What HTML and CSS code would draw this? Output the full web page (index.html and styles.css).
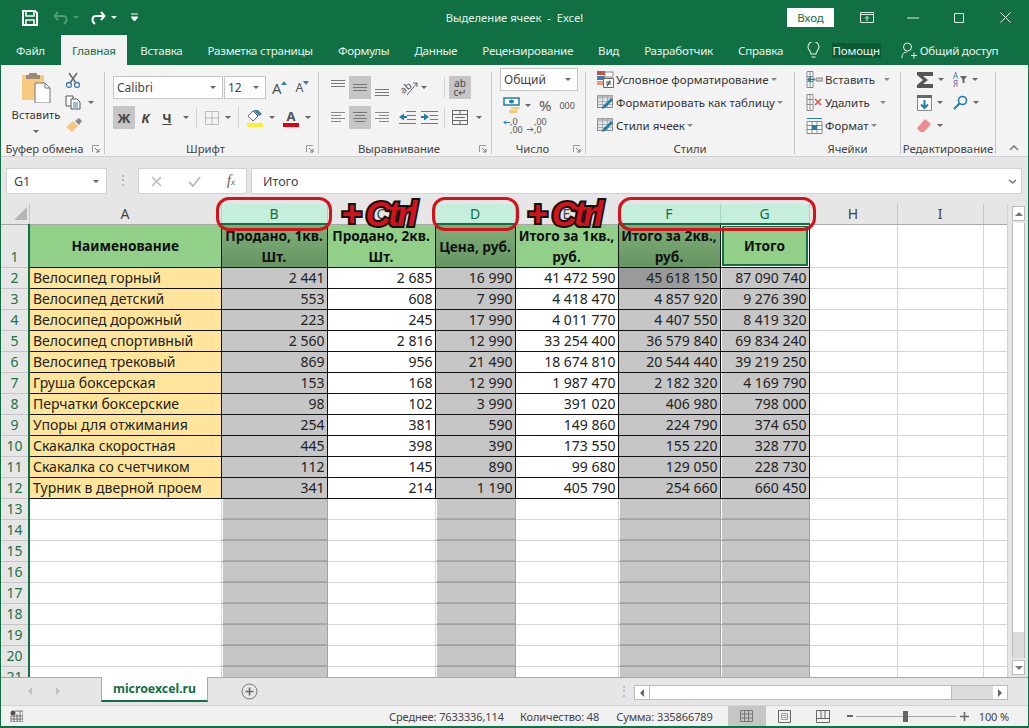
FILE: index.html
```html
<!DOCTYPE html>
<html lang="ru">
<head>
<meta charset="utf-8">
<title>Выделение ячеек - Excel</title>
<link rel="stylesheet" href="styles.css">
</head>
<body>
<div class="win">
  <header class="titlebar">
    <div class="qat">
      <svg class="ic save" width="16" height="16" viewBox="0 0 16 16"><path d="M1 1h12l2 2v12H1z" fill="none" stroke="#fff" stroke-width="2"/><path d="M4 1h8v5H4zM4 10h8v5H4z" fill="none" stroke="#fff" stroke-width="1.6"/></svg>
      <svg class="ic undo" width="16" height="14" viewBox="0 0 16 14"><path d="M5 1L1.500 5 5 9M2 5h8c4 0 5 5 1 8" fill="none" stroke="#4d9a76" stroke-width="2"/></svg>
      <i class="dd dd-faint"></i>
      <svg class="ic redo" width="16" height="14" viewBox="0 0 16 14"><path d="M11 1l3.500 4L11 9M14 5H6c-4 0-5 5-1 8" fill="none" stroke="#fff" stroke-width="2"/></svg>
      <i class="dd dd-w"></i>
      <svg class="ic cust" width="7" height="9" viewBox="0 0 7 9"><path d="M0 1h7M0 4h7l-3.500 4z" stroke="#fff" fill="#fff"/></svg>
    </div>
    <div class="doc-title">Выделение ячеек  -  Excel</div>
    <div class="wctl">
      <button class="signin">Вход</button>
      <div class="wbtn"><svg width="14" height="11" viewBox="0 0 14 11"><path d="M.5.500h13v10H.5zM.5 2.500h13M7 9V4.500M5 6.500l2-2 2 2" fill="none" stroke="#dfeee7"/></svg></div>
      <div class="wbtn"><svg width="12" height="2" viewBox="0 0 12 2"><path d="M0 1h12" stroke="#dfeee7"/></svg></div>
      <div class="wbtn"><svg width="10" height="10" viewBox="0 0 10 10"><path d="M.5.500h9v9h-9z" fill="none" stroke="#dfeee7"/></svg></div>
      <div class="wbtn"><svg width="11" height="11" viewBox="0 0 11 11"><path d="M.5.500l10 10M10.500.500l-10 10" stroke="#dfeee7"/></svg></div>
    </div>
  </header>

  <nav class="tabs">
    <span class="tab t-file">Файл</span>
    <span class="tab active">Главная</span>
    <span class="tab">Вставка</span>
    <span class="tab">Разметка страницы</span>
    <span class="tab">Формулы</span>
    <span class="tab">Данные</span>
    <span class="tab">Рецензирование</span>
    <span class="tab">Вид</span>
    <span class="tab">Разработчик</span>
    <span class="tab">Справка</span>
    <svg class="bulb" width="13" height="17" viewBox="0 0 13 17"><path d="M4 12c0-3-3-4-3-7a5.500 5.500 0 0 1 11 0c0 3-3 4-3 7zM4.500 15h4" fill="none" stroke="#e8f2ed" stroke-width="1.100"/></svg>
    <span class="help">Помощн</span>
    <svg class="person" width="16" height="17" viewBox="0 0 16 17"><circle cx="6.500" cy="5" r="4" fill="none" stroke="#e8f2ed"/><path d="M1 16c0-4 2-6 5-6M10 13.500h6M13 10.500v6" fill="none" stroke="#e8f2ed"/></svg>
    <span class="share">Общий доступ</span>
  </nav>

  <section class="ribbon">
    <div class="grp g-clip">
      <div class="body clip">
        <div class="paste">
          <svg width="30" height="31" viewBox="0 0 30 31"><path d="M1 3h22v25H1z" fill="#f8c981"/><path d="M8 1h8v2h3v4H5V3h3z" fill="#9a8a78"/><path d="M14 11h10l5 5v15H14z" fill="#fff" stroke="#777"/><path d="M24 11v5h5" fill="none" stroke="#777"/></svg>
          <span class="paste-l">Вставить</span>
          <i class="dd"></i>
        </div>
        <div class="clip-tools">
          <svg width="16" height="16" viewBox="0 0 16 16"><path d="M4 1l7 10M12 1L5 11" stroke="#666" stroke-width="1.500"/><circle cx="4" cy="13" r="2.500" fill="none" stroke="#3f7fb0" stroke-width="1.300"/><circle cx="12" cy="13" r="2.500" fill="none" stroke="#3f7fb0" stroke-width="1.300"/></svg>
          <span class="row-dd"><svg width="16" height="15" viewBox="0 0 16 15"><path d="M1 1h7v10H1z" fill="#fff" stroke="#555"/><path d="M6 4h6l3 3v7H6z" fill="#fff" stroke="#555"/><path d="M8 8h5M8 10h5M8 12h5" stroke="#3f7fb0"/></svg><i class="dd"></i></span>
          <svg width="18" height="16" viewBox="0 0 18 16"><path d="M1 10l7-6 5 5-6 6z" fill="#f5c67f"/><path d="M10 4l4-3 3 3-3 4z" fill="#8a8a8a"/></svg>
        </div>
      </div>
      <div class="lbl lbl-clip"><span>Буфер обмена</span><svg class="launch" width="8" height="8" viewBox="0 0 8 8"><use href="#launcher"/></svg></div>
    </div>

    <div class="grp g-font">
      <div class="body stack">
        <div class="line">
          <div class="sel font-sel"><span>Calibri</span><i class="dd"></i></div>
          <div class="sel size-sel"><span>12</span><i class="dd"></i></div>
          <span class="grow big">A<svg width="6" height="4" viewBox="0 0 6 4"><path d="M0 4l3-4 3 4z" fill="#3f7f9f"/></svg></span>
          <span class="grow small">A<svg width="6" height="4" viewBox="0 0 6 4"><path d="M0 0l3 4 3-4z" fill="#3f7f9f"/></svg></span>
        </div>
        <div class="line">
          <span class="btn on b-w">Ж</span>
          <span class="btn i-w">К</span>
          <span class="btn u-w">Ч</span>
          <i class="dd d-u"></i>
          <b class="vsep s-1"></b>
          <svg class="b-ic" width="14" height="14" viewBox="0 0 14 14"><path d="M.5.500h13v13H.5zM.5 7h13M7 .5v13" fill="none" stroke="#8a8a8a" stroke-dasharray="1 1"/></svg>
          <i class="dd d-b"></i>
          <b class="vsep s-2"></b>
          <svg class="fill-ic" width="18" height="18" viewBox="0 0 18 18"><path d="M2 7l5-5 5 5-5 5z" fill="#fff" stroke="#666"/><path d="M7 1l6 6 3-2-4-4z" fill="#3f7f9f"/><path d="M1 14h16v4H1z" fill="#ffee33"/></svg>
          <i class="dd d-f"></i>
          <span class="fcolor">A</span>
          <i class="dd d-c"></i>
        </div>
      </div>
      <div class="lbl"><span>Шрифт</span><svg class="launch" width="8" height="8" viewBox="0 0 8 8"><use href="#launcher"/></svg></div>
    </div>

    <div class="grp g-align">
      <div class="body stack">
        <div class="line">
          <svg class="al" width="22" height="23" viewBox="0 0 22 23"><path d="M4 4.500h14M4 7.500h14M4 10.500h14" stroke="#777"/></svg>
          <svg class="al on" width="22" height="23" viewBox="0 0 22 23"><path d="M4 8.500h14M4 11.500h14M4 14.500h14" stroke="#777"/></svg>
          <svg class="al" width="22" height="23" viewBox="0 0 22 23"><path d="M4 13.500h14M4 16.500h14M4 19.500h14" stroke="#777"/></svg>
          <svg class="orient" width="20" height="18" viewBox="0 0 20 18"><text x="1" y="12" transform="rotate(-40 7 9)" font-size="10" fill="#555" font-family="Noto Sans, sans-serif">ab</text><path d="M8 16l10-12M14 4h4v4" fill="none" stroke="#666"/></svg>
          <i class="dd d-o"></i>
          <b class="vsep s-3"></b>
          <span class="wrap on"><span>ab</span><span>c↵</span></span>
        </div>
        <div class="line">
          <svg class="al" width="22" height="23" viewBox="0 0 22 23"><path d="M4 6.500h14M4 9.500h10M4 12.500h14M4 15.500h10" stroke="#888"/></svg>
          <svg class="al on" width="22" height="23" viewBox="0 0 22 23"><path d="M4 6.500h14M6 9.500h10M4 12.500h14M6 15.500h10" stroke="#777"/></svg>
          <svg class="al" width="22" height="23" viewBox="0 0 22 23"><path d="M4 6.500h14M8 9.500h10M4 12.500h14M8 15.500h10" stroke="#888"/></svg>
          <svg class="ind i-1" width="17" height="13" viewBox="0 0 17 13"><path d="M7 .5h10M8 4.500h9M8 8.500h9M0 12.500h17" stroke="#777"/><path d="M0 6l5-3.500V5h3v2H5v2.500z" fill="#1f7fa5"/></svg>
          <svg class="ind i-2" width="17" height="13" viewBox="0 0 17 13"><path d="M0 .5h17M9 4.500h8M9 8.500h8M0 12.500h17" stroke="#777"/><path d="M8 6L3 2.500V5H0v2h3v2.500z" fill="#1f7fa5"/></svg>
          <b class="vsep s-4"></b>
          <svg class="merge" width="16" height="15" viewBox="0 0 16 15"><path d="M.5.500h15v14H.5zM.5 4.500h15M.5 10.500h15M8 .5v4M8 10.500v4" fill="none" stroke="#666"/><path d="M3 7.500h10" stroke="#1f7fa5"/></svg>
          <i class="dd d-m"></i>
        </div>
      </div>
      <div class="lbl"><span>Выравнивание</span><svg class="launch" width="8" height="8" viewBox="0 0 8 8"><use href="#launcher"/></svg></div>
    </div>

    <div class="grp g-num">
      <div class="body num">
        <div class="sel num-sel"><span>Общий</span><i class="dd"></i></div>
        <div class="line num-2">
          <svg width="18" height="17" viewBox="0 0 18 17"><path d="M1 1h15v7H1z" fill="#fff" stroke="#1f7fa5" stroke-width="1.500"/><path d="M6 4.500a2.500 2 0 0 1 5 0a2.500 2 0 0 1-5 0z" fill="#1f7fa5"/><path d="M8 10h8v2H8zM6 13h8v3H6z" fill="#f5c67f"/></svg>
          <i class="dd"></i>
          <span class="pct">%</span>
          <span class="thou">000</span>
        </div>
        <div class="line num-3">
          <span class="dec"><svg width="7" height="14" viewBox="0 0 7 14"><path d="M7 3.500H1M3 1.500l-2 2 2 2" fill="none" stroke="#1f7fa5"/></svg><span>,0<br>,00</span></span>
          <span class="dec"><svg width="7" height="14" viewBox="0 0 7 14"><path d="M0 10.500h6M4 8.500l2 2-2 2" fill="none" stroke="#1f7fa5"/></svg><span>,00<br>,0</span></span>
        </div>
      </div>
      <div class="lbl"><span>Число</span><svg class="launch" width="8" height="8" viewBox="0 0 8 8"><use href="#launcher"/></svg></div>
    </div>

    <div class="grp g-sty">
      <div class="body lst">
        <div class="item"><svg width="17" height="17" viewBox="0 0 17 17"><path d="M0 0h8v4H0z" fill="#c2573f"/><path d="M0 5h8v4H0z" fill="#3f7fb0"/><path d="M0 10h6v4H0z" fill="#e59b7f"/><path d="M8 1h8v5H8z" fill="#fff" stroke="#888"/><path d="M6.500 7.500h10v9h-10z" fill="#fff" stroke="#666"/><path d="M9 11h5M9 13h5M13 9.500l-3 6" stroke="#444"/></svg><span>Условное форматирование</span><i class="dd"></i></div>
        <div class="item"><svg width="17" height="17" viewBox="0 0 17 17"><use href="#tblstyle"/></svg><span>Форматировать как таблицу</span><i class="dd"></i></div>
        <div class="item"><svg width="17" height="17" viewBox="0 0 17 17"><use href="#tblstyle"/></svg><span>Стили ячеек</span><i class="dd"></i></div>
      </div>
      <div class="lbl nolaunch"><span>Стили</span></div>
    </div>

    <div class="grp g-cell">
      <div class="body lst">
        <div class="item"><svg width="17" height="17" viewBox="0 0 17 17"><path d="M1 .5h6v16H1zM1 5.500h6M1 10.500h6M4 .5v16" fill="#fff" stroke="#888"/><path d="M10 7h7v3h-7z" fill="#ccc" stroke="#888"/><path d="M2 8.500h7M5 6L2 8.500 5 11" fill="none" stroke="#1f7fa5" stroke-width="1.300"/></svg><span>Вставить</span><i class="dd d1"></i></div>
        <div class="item"><svg width="17" height="17" viewBox="0 0 17 17"><path d="M1 .5h6v16H1zM1 5.500h6M1 10.500h6M4 .5v16" fill="#fff" stroke="#888"/><path d="M9 5l6 6M15 5l-6 6" stroke="#d9534f" stroke-width="1.500"/></svg><span>Удалить</span><i class="dd d2"></i></div>
        <div class="item"><svg width="17" height="17" viewBox="0 0 17 17"><path d="M1 4.500h15v12H1zM1 8.500h15M1 12.500h15M6 4.500v12M11 4.500v12" fill="#fff" stroke="#888"/><path d="M6 8h5v5H6z" fill="#1f7fa5"/><path d="M1 1.500h15" stroke="#1f7fa5"/></svg><span>Формат</span><i class="dd"></i></div>
      </div>
      <div class="lbl nolaunch"><span>Ячейки</span></div>
    </div>

    <div class="grp g-edit">
      <div class="body edit">
        <div class="line e1">
          <svg class="sigma" width="16" height="16" viewBox="0 0 16 16"><path d="M0 0h16v4H6l5 4-5 4h10v4H0v-3l6-5-6-5z" fill="#555"/></svg><i class="dd"></i>
          <span class="sort"><span>А</span><span class="ya">Я</span></span>
          <svg class="fun" width="7" height="7" viewBox="0 0 7 7"><path d="M0 0h7L4.500 3.500V7h-2V3.500z" fill="#666"/></svg><i class="dd"></i>
        </div>
        <div class="line e2">
          <svg width="15" height="16" viewBox="0 0 15 16"><path d="M.5 2.500h14v13H.5z" fill="#fff" stroke="#888"/><path d="M0 0h15v3H0z" fill="#666"/><path d="M7.500 5v8M4 9.500l3.500 3.500 3.500-3.500" fill="none" stroke="#1f7fa5" stroke-width="2"/></svg><i class="dd"></i>
          <svg class="lens" width="15" height="15" viewBox="0 0 15 15"><circle cx="9.500" cy="5.500" r="4" fill="none" stroke="#1f7fa5" stroke-width="1.600"/><path d="M6.500 8.500L1 14" stroke="#1f7fa5" stroke-width="2"/></svg><i class="dd"></i>
        </div>
        <div class="line e3">
          <svg width="15" height="15" viewBox="0 0 15 15"><path d="M0 10l8-9 6 5-7 8H3z" fill="#ee8d91"/></svg><i class="dd"></i>
        </div>
      </div>
      <div class="lbl nolaunch"><span>Редактирование</span></div>
    </div>
    <div class="collapse"><svg width="10" height="6" viewBox="0 0 10 6"><path d="M1 5l4-4 4 4" fill="none" stroke="#777" stroke-width="1.500"/></svg></div>
  </section>

  <div class="fbar">
    <div class="namebox"><span>G1</span><i class="dd"></i></div>
    <div class="fdots">⋮</div>
    <div class="fbtns">
      <svg width="11" height="11" viewBox="0 0 11 11"><path d="M1 1l9 9M10 1l-9 9" stroke="#bbb" stroke-width="1.500"/></svg>
      <svg width="13" height="11" viewBox="0 0 13 11"><path d="M1 6l4 4 7-9" fill="none" stroke="#bbb" stroke-width="1.800"/></svg>
      <span class="fx">f<sub>x</sub></span>
    </div>
    <div class="finput"><span>Итого</span><svg width="9" height="5" viewBox="0 0 9 5"><path d="M1 1l3.500 3L8 1" fill="none" stroke="#666" stroke-width="1.300"/></svg></div>
  </div>

  <div class="sheetrow">
    <div class="sheet">
      <div class="viewport">
        <table class="cells">
          <colgroup><col class="c0"><col class="ca"><col class="cb"><col class="cc"><col class="cd"><col class="ce"><col class="cf"><col class="cg"><col class="ch"><col class="ci"><col class="cj"></colgroup>
          <thead>
            <tr><th class="corner"><svg width="13" height="13" viewBox="0 0 13 13"><path d="M13 0v13H0z" fill="#b5b5b5"/></svg></th><th>A</th><th class="sh">B</th><th>C</th><th class="sh">D</th><th>E</th><th class="sh">F</th><th class="sh">G</th><th>H</th><th>I</th><th class="last"></th></tr>
          </thead>
          <tbody>
            <tr class="r1"><th>1</th><td class="hd">Наименование</td><td class="hd dk">Продано, 1кв.<br>Шт.</td><td class="hd">Продано, 2кв.<br>Шт.</td><td class="hd dk">Цена, руб.</td><td class="hd">Итого за 1кв.,<br>руб.</td><td class="hd dk">Итого за 2кв.,<br>руб.</td><td class="hd act"><span>Итого</span></td><td></td><td></td><td></td></tr>
            <tr class="d"><th>2</th><td class="nm">Велосипед горный</td><td class="s">2 441</td><td>2 685</td><td class="s">16 990</td><td>41 472 590</td><td class="s first">45 618 150</td><td class="s gl">87 090 740</td><td></td><td></td><td></td></tr>
            <tr class="d"><th>3</th><td class="nm">Велосипед детский</td><td class="s">553</td><td>608</td><td class="s">7 990</td><td>4 418 470</td><td class="s">4 857 920</td><td class="s gl">9 276 390</td><td></td><td></td><td></td></tr>
            <tr class="d"><th>4</th><td class="nm">Велосипед дорожный</td><td class="s">223</td><td>245</td><td class="s">17 990</td><td>4 011 770</td><td class="s">4 407 550</td><td class="s gl">8 419 320</td><td></td><td></td><td></td></tr>
            <tr class="d"><th>5</th><td class="nm">Велосипед спортивный</td><td class="s">2 560</td><td>2 816</td><td class="s">12 990</td><td>33 254 400</td><td class="s">36 579 840</td><td class="s gl">69 834 240</td><td></td><td></td><td></td></tr>
            <tr class="d"><th>6</th><td class="nm">Велосипед трековый</td><td class="s">869</td><td>956</td><td class="s">21 490</td><td>18 674 810</td><td class="s">20 544 440</td><td class="s gl">39 219 250</td><td></td><td></td><td></td></tr>
            <tr class="d"><th>7</th><td class="nm">Груша боксерская</td><td class="s">153</td><td>168</td><td class="s">12 990</td><td>1 987 470</td><td class="s">2 182 320</td><td class="s gl">4 169 790</td><td></td><td></td><td></td></tr>
            <tr class="d"><th>8</th><td class="nm">Перчатки боксерские</td><td class="s">98</td><td>102</td><td class="s">3 990</td><td>391 020</td><td class="s">406 980</td><td class="s gl">798 000</td><td></td><td></td><td></td></tr>
            <tr class="d"><th>9</th><td class="nm">Упоры для отжимания</td><td class="s">254</td><td>381</td><td class="s">590</td><td>149 860</td><td class="s">224 790</td><td class="s gl">374 650</td><td></td><td></td><td></td></tr>
            <tr class="d"><th>10</th><td class="nm">Скакалка скоростная</td><td class="s">445</td><td>398</td><td class="s">390</td><td>173 550</td><td class="s">155 220</td><td class="s gl">328 770</td><td></td><td></td><td></td></tr>
            <tr class="d"><th>11</th><td class="nm">Скакалка со счетчиком</td><td class="s">112</td><td>145</td><td class="s">890</td><td>99 680</td><td class="s">129 050</td><td class="s gl">228 730</td><td></td><td></td><td></td></tr>
            <tr class="d"><th>12</th><td class="nm">Турник в дверной проем</td><td class="s">341</td><td>214</td><td class="s">1 190</td><td>405 790</td><td class="s">254 660</td><td class="s gl">660 450</td><td></td><td></td><td></td></tr>
            <tr><th>13</th><td></td><td class="s"></td><td></td><td class="s"></td><td></td><td class="s"></td><td class="s"></td><td></td><td></td><td></td></tr>
            <tr><th>14</th><td></td><td class="s"></td><td></td><td class="s"></td><td></td><td class="s"></td><td class="s"></td><td></td><td></td><td></td></tr>
            <tr><th>15</th><td></td><td class="s"></td><td></td><td class="s"></td><td></td><td class="s"></td><td class="s"></td><td></td><td></td><td></td></tr>
            <tr><th>16</th><td></td><td class="s"></td><td></td><td class="s"></td><td></td><td class="s"></td><td class="s"></td><td></td><td></td><td></td></tr>
            <tr><th>17</th><td></td><td class="s"></td><td></td><td class="s"></td><td></td><td class="s"></td><td class="s"></td><td></td><td></td><td></td></tr>
            <tr><th>18</th><td></td><td class="s"></td><td></td><td class="s"></td><td></td><td class="s"></td><td class="s"></td><td></td><td></td><td></td></tr>
            <tr><th>19</th><td></td><td class="s"></td><td></td><td class="s"></td><td></td><td class="s"></td><td class="s"></td><td></td><td></td><td></td></tr>
            <tr><th>20</th><td></td><td class="s"></td><td></td><td class="s"></td><td></td><td class="s"></td><td class="s"></td><td></td><td></td><td></td></tr>
            <tr><th>21</th><td></td><td class="s"></td><td></td><td class="s"></td><td></td><td class="s"></td><td class="s"></td><td></td><td></td><td></td></tr>
          </tbody>
        </table>
      </div>
      <div class="mark m-b"></div>
      <div class="mark m-d"></div>
      <div class="mark m-fg"></div>
      <div class="ctrl c-1">+ Ctrl</div>
      <div class="ctrl c-2">+ Ctrl</div>
    </div>
    <div class="vscroll">
      <div class="sbtn"><i class="up"></i></div>
      <div class="vthumb"></div>
      <div class="sbtn"><i class="dn"></i></div>
    </div>
  </div>

  <div class="tabbar">
    <div class="nav"><i class="lt"></i><i class="rt"></i></div>
    <div class="sheet-tab">microexcel.ru</div>
    <svg class="add" width="17" height="17" viewBox="0 0 17 17"><circle cx="8.500" cy="8.500" r="7.500" fill="none" stroke="#777"/><path d="M4.500 8.500h8M8.500 4.500v8" stroke="#666" stroke-width="1.500"/></svg>
    <div class="tdots">⋮</div>
    <div class="hscroll">
      <div class="hbtn"><i class="lt dk"></i></div>
      <div class="hthumb"></div>
      <div class="htrack"></div>
      <div class="hbtn"><i class="rt dk"></i></div>
    </div>
  </div>

  <footer class="status">
    <svg class="macro" width="13" height="12" viewBox="0 0 13 12"><circle cx="3" cy="3" r="2.500" fill="#555"/><path d="M5 1h8v11H1V6h12M1 9h12M4 6v6M7 4v8M10 1v11" fill="none" stroke="#555" stroke-width=".8"/></svg>
    <span class="st s-avg">Среднее: 7633336,114</span>
    <span class="st s-cnt">Количество: 48</span>
    <span class="st s-sum">Сумма: 335866789</span>
    <div class="view on"><svg width="13" height="12" viewBox="0 0 13 12"><path d="M.5.500h12v11H.5zM.5 4h12M.5 8h12M4.500.5v11M8.500.5v11" fill="none" stroke="#666" stroke-width=".8"/></svg></div>
    <div class="view"><svg width="13" height="13" viewBox="0 0 13 13"><path d="M.5.500h12v12H.5z" fill="none" stroke="#666"/><path d="M3.500 3.500h6v6h-6zM4.500 5.500h4M4.500 7.500h4" fill="none" stroke="#888" stroke-width=".8"/></svg></div>
    <div class="view"><svg width="14" height="13" viewBox="0 0 14 13"><path d="M.5.500h13v12H.5zM.5 8.500h13M5 .5v8M9 .5v8" fill="none" stroke="#666"/></svg></div>
    <div class="zoom"><b class="minus"></b><div class="slider"><b class="knob"></b></div><svg width="9" height="9" viewBox="0 0 9 9"><path d="M0 4.500h9M4.500 0v9" stroke="#666" stroke-width="1.500"/></svg></div>
    <span class="st pctz">100 %</span>
  </footer>
</div>
<svg class="defs" width="0" height="0">
  <symbol id="launcher" viewBox="0 0 8 8"><path d="M.5 7V.5H7" fill="none" stroke="#999"/><path d="M3 3l4 4M7 4v3H4" fill="none" stroke="#777"/></symbol>
  <symbol id="tblstyle" viewBox="0 0 17 17"><path d="M.5 1.500h15v12H.5z" fill="#dfe7ea" stroke="#888"/><path d="M.5 1.500h15v3H.5z" fill="#bbb"/><path d="M.5 7.500h15M.5 10.500h15M5.500 1.500v12M10.500 1.500v12" stroke="#999" stroke-width=".7"/><path d="M5 15l3-1 8-8-2-2-8 8z" fill="#1f7fa5"/></symbol>
</svg>
</body>
</html>
```
FILE: styles.css
```css
* { box-sizing: border-box; }
html, body { margin: 0; padding: 0; }
body { width: 1029px; height: 728px; overflow: hidden; font-family: "Noto Sans", "Open Sans", sans-serif; font-size: 12px; color: #333; background: #107044; }
svg { flex: none; }
.defs { display: block; width: 0; height: 0; }
.win { width: 1029px; height: 728px; display: flex; flex-direction: column; border-left: 1px solid #107044; border-right: 1px solid #107044; border-bottom: 2px solid #107044; }
.dd { display: inline-block; width: 0; height: 0; border-left: 3px solid transparent; border-right: 3px solid transparent; border-top: 3px solid #666; flex: none; }
.dd-w { border-top-color: #fff; margin-left: 5px; }
.dd-faint { border-top-color: #4d9a76; margin-left: 4px; }

/* title bar */
.titlebar { height: 35px; flex: none; background: #107044; display: grid; grid-template-columns: 1fr auto 1fr; align-items: center; color: #e8f2ed; }
.qat { display: flex; align-items: center; padding-left: 21px; }
.qat .undo { margin-left: 15px; }
.qat .redo { margin-left: 11px; }
.qat .cust { margin-left: 14px; }
.doc-title { font-size: 11.200px; white-space: pre; }
.wctl { display: flex; justify-content: flex-end; align-items: center; }
.signin { width: 47px; height: 19px; border: 0; padding: 0; background: #fff; color: #107044; font: 11.500px "Noto Sans", sans-serif; margin-right: 10px; }
.wbtn { width: 46px; height: 24px; display: flex; align-items: center; justify-content: center; }

/* tabs */
.tabs { height: 30px; flex: none; background: #107044; display: flex; align-items: stretch; color: #e8f2ed; font-size: 11.600px; letter-spacing: -.25px; white-space: nowrap; }
.tab { display: flex; align-items: center; padding: 0 12.500px; white-space: nowrap; }
.t-file { padding: 0 16px 0 15px; }
.tab.active { background: #f3f3f3; color: #107044; padding: 0 11px; margin-right: 1px; }
.bulb { align-self: center; margin-left: 11px; }
.help { align-self: center; margin-left: 12px; padding: 0 1px; background: #0b5a35; }
.person { align-self: center; margin-left: 20px; }
.share { align-self: center; margin-left: 3px; }

/* ribbon */
.ribbon { height: 92px; flex: none; background: #f3f3f3; display: flex; border-bottom: 1px solid #d2d2d2; }
.grp { display: flex; flex-direction: column; height: 91px; flex: none; border-right: 1px solid transparent; }
.grp::after { content: ""; width: 1px; height: 84px; background: #c6c6c6; align-self: flex-end; margin-top: -84px; margin-bottom: 2px; margin-right: -1px; }
.g-clip { width: 104px; }
.g-font { width: 214px; }
.g-align { width: 173px; }
.g-num { width: 94px; }
.g-sty { width: 209px; }
.g-cell { width: 106px; }
.g-edit { width: 95px; }
.body { height: 76px; flex: none; }
.lbl { height: 15px; display: flex; align-items: center; font-size: 11.300px; color: #444; }
.lbl span { flex: 1; text-align: center; white-space: nowrap; }
.launch { margin-right: 4px; flex: none; }
.lbl-clip .launch { margin-left: 4px; }
.collapse { flex: 1; display: flex; align-items: flex-end; justify-content: center; padding: 0 0 5px 4px; }

/* clipboard */
.clip { display: flex; padding: 7px 0 0 9px; }
.paste { width: 52px; display: flex; flex-direction: column; align-items: center; font-size: 11.200px; color: #333; }
.paste-l { margin-top: 3px; line-height: 18px; }
.paste .dd { margin-top: 6px; }
.clip-tools { display: flex; flex-direction: column; gap: 7px; margin-left: 3px; }
.row-dd { display: flex; align-items: center; gap: 7px; }

/* font */
.stack { display: flex; flex-direction: column; gap: 7px; padding: 11px 0 0 8px; }
.line { display: flex; align-items: center; height: 23px; }
.sel { background: #fff; border: 1px solid #c6c6c6; height: 23px; display: flex; align-items: center; justify-content: space-between; padding: 0 6px 0 3px; font-size: 12px; color: #444; }
.font-sel { width: 110px; }
.size-sel { width: 42px; margin-left: 1px; }
.grow { display: inline-flex; align-items: flex-start; color: #555; font-weight: 400; }
.grow.big { font-size: 15px; margin-left: 6px; line-height: 20px; }
.grow.small { font-size: 12.500px; margin-left: 9px; line-height: 20px; }
.grow svg { margin-left: -1px; margin-top: 3px; }
.btn { width: 22px; height: 23px; display: flex; align-items: center; justify-content: center; font-size: 13px; font-weight: 700; color: #444; }
.on { background: #c6c6c6; }
.i-w { font-style: italic; margin-left: 1px; width: 19px; }
.u-w { text-decoration: underline; margin-left: 1px; }
.d-u { margin-left: 5px; }
.vsep { display: block; width: 1px; height: 21px; background: #d2d2d2; flex: none; }
.s-1 { margin-left: 7px; }
.b-ic { margin-left: 8px; }
.d-b { margin-left: 6px; }
.s-2 { margin-left: 7px; }
.fill-ic { margin-left: 7px; }
.d-f { margin-left: 5px; }
.fcolor { width: 16px; margin-left: 8px; text-align: center; font-size: 13px; font-weight: 700; line-height: 15px; height: 18px; color: #555; border-bottom: 4px solid #e3000f; }
.d-c { margin-left: 6px; }

/* alignment */
.al { display: block; flex: none; }
.orient { margin-left: 6px; }
.d-o { margin-left: 2px; }
.s-3 { margin-left: 17px; }
.wrap { width: 22px; height: 23px; margin-left: 4px; display: flex; flex-direction: column; align-items: center; font-size: 10px; line-height: 9px; padding-top: 3px; color: #444; }
.i-1 { margin-left: 6px; }
.i-2 { margin-left: 5px; }
.s-4 { margin-left: 6px; }
.merge { margin-left: 7px; }
.d-m { margin-left: 8px; }

/* number */
.num { padding: 3px 0 0 8px; display: flex; flex-direction: column; }
.num-sel { width: 78px; }
.num-2 { height: 22px; margin-top: 3px; padding-left: 3px; gap: 4px; }
.pct { font-size: 15px; color: #555; margin-left: 4px; }
.thou { font-size: 9px; color: #555; margin-left: 4px; }
.num-3 { height: 20px; gap: 3px; padding-left: 3px; }
.dec { display: flex; align-items: center; font-size: 9px; line-height: 8px; color: #555; width: 21px; }

/* style + cell lists */
.lst { display: flex; flex-direction: column; padding: 3px 0 0 11px; }
.item { display: flex; align-items: center; height: 23px; gap: 2px; font-size: 11.500px; color: #333; white-space: nowrap; }
.item .dd { border-top-color: #888; }
.item .d1 { margin-left: 7px; }
.item .d2 { margin-left: 8px; }

/* editing */
.edit { padding: 3px 0 0 16px; }
.edit .line { height: 23px; gap: 5px; }
.sort { display: flex; flex-direction: column; font-size: 8px; line-height: 8px; margin-left: 4px; color: #1f7fa5; }
.ya { color: #7f4fa0; }
.fun { margin-left: -3px; }
.e2 .lens { margin-left: 5px; }

/* formula bar */
.fbar { height: 47px; flex: none; background: #e6e6e6; display: flex; padding: 11px 6px 10px 5px; align-items: stretch; }
.namebox { width: 101px; background: #fff; border: 1px solid #d2d2d2; display: flex; align-items: center; justify-content: space-between; padding: 0 7px; font-size: 12.500px; color: #444; }
.fdots { width: 31px; text-align: center; color: #aaa; line-height: 24px; }
.fbtns { width: 109px; background: #fff; border: 1px solid #d2d2d2; display: flex; align-items: center; justify-content: space-between; padding: 0 11px 0 12px; }
.fx { font-family: "Liberation Serif", serif; font-style: italic; font-size: 14px; color: #555; line-height: 12px; }
.fx sub { font-size: 9px; vertical-align: baseline; }
.finput { flex: 1; margin-left: 4px; background: #fff; border: 1px solid #d2d2d2; display: flex; align-items: center; justify-content: space-between; padding: 0 4px 0 11px; font-size: 12.500px; color: #444; }

/* sheet */
.sheetrow { height: 473px; flex: none; display: flex; background: #e6e6e6; }
.sheet { position: relative; width: 1006px; height: 473px; flex: none; }
.viewport { width: 1006px; height: 473px; overflow: hidden; background: #fff; }
.cells { border-collapse: collapse; table-layout: fixed; width: 1006px; font-size: 14px; color: #222; }
.c0 { width: 28px; } .ca { width: 192px; } .cb { width: 106px; } .cc { width: 108px; } .cd { width: 80px; } .ce { width: 103px; } .cf { width: 102px; } .cg { width: 89px; } .ch { width: 88px; } .ci { width: 86px; } .cj { width: 24px; }
.cells thead tr { height: 20px; }
.cells thead th { background: #e6e6e6; font-weight: 400; color: #444; padding: 0; border-right: 1px solid #c6c6c6; border-bottom: 1px solid #a9a9a9; line-height: 18px; }
.cells thead th.sh { background: #c5eedd; color: #107044; border-bottom: 2px solid #107044; border-right-color: #a9d6c3; }
.cells thead th.last { border-right: 0; }
.corner svg { display: block; margin-left: auto; margin-right: 2px; }
.cells tbody tr { height: 21px; }
.cells tbody tr.r1 { height: 43px; }
.cells tbody th { background: #e6e6e6; color: #217346; font-weight: 400; padding: 0; vertical-align: bottom; line-height: 20px; border-right: 2px solid #107044; border-bottom: 1px solid #c6c6c6; }
.cells td { border: 1px solid #d4d4d4; padding: 0 2px 0 3px; text-align: right; vertical-align: bottom; line-height: 20px; white-space: nowrap; overflow: hidden; }
.cells td.s { background: #c6c6c6; border-color: #a2a2a2; box-shadow: inset 1px 0 0 #fff, inset 0 -1px 0 #aaa; }
.cells tr.d td:nth-child(-n+8), .cells tr.r1 td:nth-child(-n+8) { border: 1px solid #111; }
.cells tr.d td.s { box-shadow: none; }
.cells tr.d td.gl { box-shadow: inset 1px 0 0 #fff; }
.cells td.nm { background: #ffe49b; text-align: left; }
.cells td.hd { background: #92d08a; color: #111; font-weight: 700; font-size: 13.700px; text-align: center; vertical-align: middle; line-height: 21px; padding: 0; }
.cells td.dk { background: linear-gradient(#7fae78, #679563); }
.cells td.act { padding: 1px; box-shadow: inset 0 0 0 1px #fff; }
.cells td.act span { display: block; height: 40px; line-height: 38px; border: 2px solid #107044; border-top-width: 1px; box-shadow: inset 0 0 0 1px #92d08a; }
.cells td.first { background: linear-gradient(90deg, #9a9a9a 0 60%, #b5b5b5); }
.mark { position: absolute; top: -7px; height: 34px; border: 3px solid #d3121b; border-radius: 13px; }
.m-b { left: 215px; width: 116px; }
.m-d { left: 431px; width: 87px; }
.m-fg { left: 617px; width: 198px; }
.ctrl { position: absolute; top: -10px; font-family: "Liberation Sans", sans-serif; font-weight: 700; font-style: italic; font-size: 35px; line-height: 40px; letter-spacing: -2.800px; white-space: pre; color: #d3121b; -webkit-text-stroke: 4px #111; paint-order: stroke fill; }
.c-1 { left: 340px; }
.c-2 { left: 526px; }

/* vertical scroll */
.vscroll { flex: 1; display: flex; flex-direction: column; padding: 2px 3px 2px 4px; border-left: 1px solid #d2d2d2; gap: 2px; }
.sbtn { height: 15px; flex: none; background: #fff; border: 1px solid #bbb; display: flex; align-items: center; justify-content: center; }
.vthumb { flex: 1; background: linear-gradient(#fff 0 94%, #dcdcdc 94%); border-left: 1px solid #bbb; border-right: 1px solid #bbb; }
.up { border-left: 4px solid transparent; border-right: 4px solid transparent; border-bottom: 4px solid #777; }
.dn { border-left: 4px solid transparent; border-right: 4px solid transparent; border-top: 4px solid #777; }

/* tab bar */
.tabbar { height: 28px; flex: none; background: #e6e6e6; border-top: 1px solid #a9a9a9; display: flex; align-items: flex-start; }
.nav { width: 100px; display: flex; padding: 9px 0 0 27px; gap: 24px; }
.lt { display: block; width: 0; height: 0; border-top: 4px solid transparent; border-bottom: 4px solid transparent; border-right: 4px solid #c0c0c0; }
.rt { display: block; width: 0; height: 0; border-top: 4px solid transparent; border-bottom: 4px solid transparent; border-left: 4px solid #c0c0c0; }
.lt.dk { border-right-color: #666; }
.rt.dk { border-left-color: #666; }
.sheet-tab { width: 107px; height: 25px; margin-top: -1px; background: #fff; border-left: 1px solid #a9a9a9; border-right: 1px solid #a9a9a9; border-bottom: 2px solid #107044; color: #107044; font-weight: 700; font-size: 12.300px; text-align: center; line-height: 23px; }
.add { margin: 5px 0 0 33px; }
.tdots { width: 8px; margin-left: 360px; color: #aaa; line-height: 26px; }
.hscroll { margin: 7px 0 0 8px; width: 374px; height: 15px; display: flex; border: 1px solid #bbb; background: #dcdcdc; }
.hbtn { width: 14px; background: #fff; display: flex; align-items: center; justify-content: center; flex: none; }
.hthumb { width: 303px; background: #fff; border-left: 1px solid #bbb; border-right: 1px solid #bbb; }
.htrack { flex: 1; }

/* status */
.status { flex: 1; background: #f1f1f1; border-top: 1px solid #d2d2d2; display: flex; align-items: center; font-size: 11px; letter-spacing: -.1px; color: #444; }
.macro { margin-left: 9px; }
.st { white-space: nowrap; }
.s-avg { margin-left: 366px; }
.s-cnt { margin-left: 16px; }
.s-sum { margin-left: 17px; }
.view { width: 38px; height: 100%; display: flex; align-items: center; justify-content: center; }
.view.on { margin-left: 15px; }
.zoom { display: flex; align-items: center; margin-left: 5px; }
.minus { display: block; width: 6px; height: 2px; background: #666; }
.slider { width: 100px; height: 1px; margin: 0 4px 0 3px; background: #a9a9a9; display: flex; align-items: center; justify-content: center; }
.knob { display: block; width: 5px; height: 11px; background: #666; }
.pctz { margin-left: 10px; }
```
